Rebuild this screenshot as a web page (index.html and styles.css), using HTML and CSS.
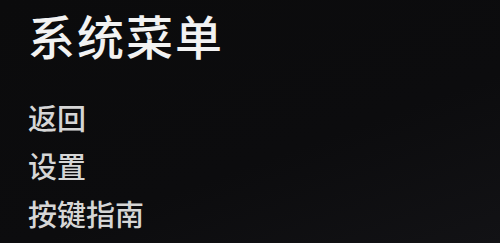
FILE: index.html
```html
<!DOCTYPE html>
<html lang="zh-CN">
<head>
<meta charset="utf-8">
<link rel="stylesheet" href="styles.css">
</head>
<body>
<main class="screen">
  <h1 class="title">系统菜单</h1>
  <ul class="menu">
    <li class="item">返回</li>
    <li class="item">设置</li>
    <li class="item">按键指南</li>
  </ul>
</main>
</body>
</html>
```
FILE: styles.css
```css
html, body {
  margin: 0;
  padding: 0;
  background: #0b0b0c;
}
body {
  font-family: "Noto Sans CJK SC", "Noto Sans", sans-serif;
}
.screen {
  width: 500px;
  min-height: 243px;
  box-sizing: border-box;
  padding: 7px 0 0 28px;
  background: linear-gradient(160deg, #0b0b0c 0%, #0c0c0e 60%, #121215 100%);
}
.title {
  margin: 0;
  font-size: 47px;
  line-height: 56px;
  font-weight: 500;
  color: #f2f2f2;
  letter-spacing: 2px;
}
.menu {
  list-style: none;
  margin: 37px 0 0 0;
  padding: 0;
  display: flex;
  flex-direction: column;
  gap: 14px;
}
.item {
  font-size: 29px;
  line-height: 34px;
  font-weight: 500;
  color: #d6d6d6;
}
```
